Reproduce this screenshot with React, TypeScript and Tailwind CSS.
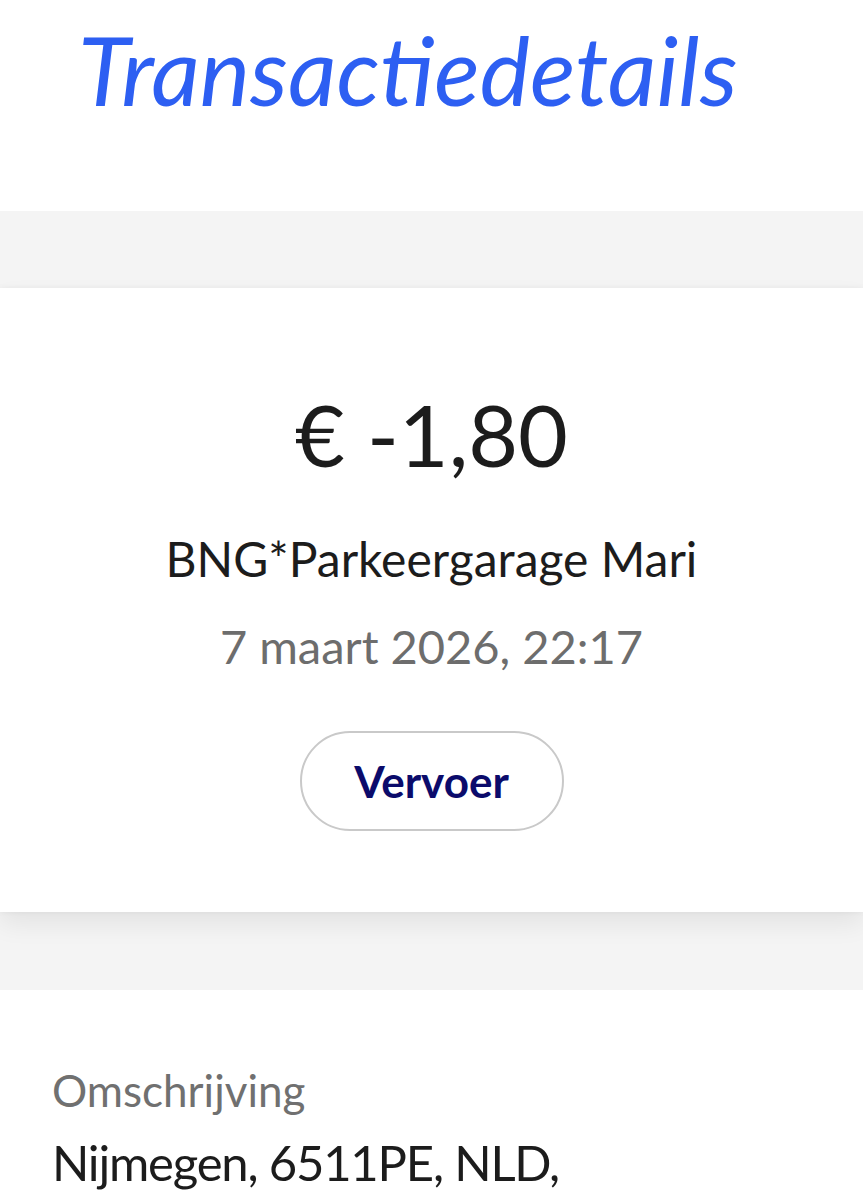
import React from 'react';

const font = { fontFamily: 'Lato, "Open Sans", sans-serif' };

export default function App() {
  return (
    <div className="min-h-screen bg-white" style={font}>
      {/* Header */}
      <header className="h-[211px] bg-white pl-[78px] pt-[22px]">
        <h1 className="text-[95px] leading-none italic text-[#2d5ff2]">Transactiedetails</h1>
      </header>

      <div className="h-[77px] bg-[#f4f4f4]" />

      {/* Amount card */}
      <section className="relative z-10 h-[624px] bg-white shadow-[0_0_6px_rgba(0,0,0,0.05),0_12px_24px_rgba(0,0,0,0.07)] flex flex-col items-center pt-[103px]">
        <div className="text-[86px] leading-none text-[#1c1c1c]">€ -1,80</div>
        <div className="mt-[58px] text-[48px] leading-none text-[#1c1c1c]">BNG*Parkeergarage Mari</div>
        <div className="mt-[40px] text-[47px] leading-none text-[#6d6d6d]">7 maart 2026, 22:17</div>
        <button className="mt-[61px] h-[100px] w-[264px] rounded-full border-2 border-[#c9c9c9] bg-white text-[44px] font-bold leading-none text-[#0b0b6b]">
          Vervoer
        </button>
      </section>

      <div className="h-[78px] bg-[#f4f4f4]" />

      {/* Details */}
      <section className="bg-white px-[52px] pt-[78px]">
        <div className="text-[44px] leading-none text-[#707070]">Omschrijving</div>
        <div className="mt-[26px] text-[49px] leading-none tracking-[-1.2px] text-[#1c1c1c]">Nijmegen, 6511PE, NLD,</div>
      </section>
    </div>
  );
}
